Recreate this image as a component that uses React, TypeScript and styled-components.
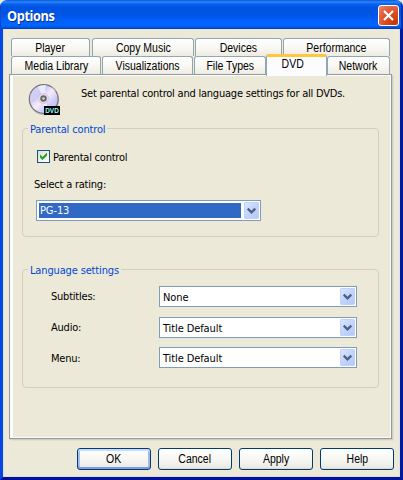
import React from "react";
import styled, { createGlobalStyle } from "styled-components";

const GlobalStyle = createGlobalStyle`
  * { box-sizing: border-box; }
  body { margin: 0; background: #ece9d8; overflow: hidden; }
`;

const Window = styled.div`
  width: 403px;
  height: 480px;
  display: flex;
  flex-direction: column;
  background: #ece9d8;
  border-radius: 7px 7px 0 0;
  overflow: hidden;
  color: #000;
  font: 11px/14px "DejaVu Sans Condensed", "DejaVu Sans", sans-serif;
  font-stretch: condensed;
`;

const TitleBar = styled.header`
  height: 29px;
  flex: none;
  display: flex;
  justify-content: space-between;
  align-items: flex-start;
  padding: 5px 4px 0 6.6px;
  background: linear-gradient(#0a55d8 0, #2b86fb 2px, #0a62f0 4px, #0054e3 7px, #0055e5 15px, #0061fb 21px, #0166ff 25px, #005bef 27px, #0038b8 29px);
  box-shadow: inset 1px 0 #0846cc, inset -2px 0 #0030b4;
`;

const Title = styled.h1`
  margin: 0;
  color: #fff;
  font: bold 14px/22px "Open Sans", sans-serif;
  letter-spacing: -0.45px;
  text-shadow: 1px 1px #0b2f8c;
  transform: scaleX(0.91);
  transform-origin: left;
`;

const CloseButton = styled.button`
  width: 21px;
  height: 21px;
  padding: 0;
  border: 1px solid #fff;
  border-radius: 3px;
  background: radial-gradient(circle at 85% 90%, #c73705 0, #dc4c22 45%, #e5694a 75%, #eb8b70 100%);
  svg { display: block; }
`;

const Body = styled.main`
  flex: 1;
  padding: 9px 7px 0 6px;
  border: solid;
  border-width: 0 3px 3px;
  border-color: transparent #001ba0 #00129b #0648df;
  box-shadow: inset 1px 0 #d9e0e6, inset -1px 0 #e0e0e2, inset 0 -1px #dadde3;
`;

const TabRow = styled.div<{ $front?: boolean }>`
  display: flex;
  height: 18px;
  padding: 0 2px;
  position: relative;
  z-index: ${(p) => (p.$front ? 2 : 0)};
`;

const TabShape = styled.div<{ $w: number; $gap?: number; $active?: boolean }>`
  flex: none;
  width: ${(p) => p.$w}px;
  height: ${(p) => (p.$active ? 22 : 18)}px;
  margin: ${(p) => (p.$active ? -2 : 0)}px ${(p) => p.$gap ?? 0}px 0 0;
  padding-right: ${(p) => (p.$active ? 8 : 0)}px;
  border: 1px solid #91a7b4;
  border-bottom: 0;
  border-radius: 3px 3px 0 0;
  background: ${(p) => (p.$active ? "#fcfcfe" : "linear-gradient(#fff, #f8f7f2 55%, #edebe2)")};
  ${(p) => p.$active && "border-top: 3px solid #ffc73c; box-shadow: inset 0 0 #fff, 0 -1px 0 -1px #e68b2c;"}
  display: flex;
  justify-content: center;
  font: 12px/${(p) => (p.$active ? 14 : 19)}px "Liberation Sans", sans-serif;
  white-space: nowrap;
`;

const Narrow = styled.span`
  display: inline-block;
  transform: scaleX(0.875);
`;

const Panel = styled.section`
  width: 383px;
  height: 365px;
  border: 1px solid #919b9c;
  box-shadow: inset 3px 0 #fcfcfe, inset -1px -1px #fcfcfe, inset 0 1px #fcfcfe, 1px 1px #d0cebf, 2px 2px #e3e0d0;
  padding: 8px 12px 0;
  letter-spacing: -0.22px;
`;

const Intro = styled.div`
  display: flex;
  height: 38px;
  padding-left: 6px;
  gap: 19px;
  svg { flex: none; }
`;

const Text = styled.span`
  white-space: nowrap;
`;

const IntroText = styled(Text)`
  padding-top: 4px;
`;

const Group = styled.fieldset<{ $h: number; $mt?: number; $pl: number }>`
  min-width: 0;
  width: 357px;
  height: ${(p) => p.$h}px;
  margin: ${(p) => p.$mt ?? 0}px 0 0;
  padding: 0 0 0 ${(p) => p.$pl}px;
  border: 1px solid #d0d0bf;
  border-radius: 4px;
`;

const Legend = styled.legend<{ $pull: number }>`
  height: 14px;
  margin-left: -${(p) => p.$pull}px;
  padding: 0 2px;
  color: #0046d5;
  line-height: 17px;
  letter-spacing: -0.15px;
`;

const CheckRow = styled.div`
  display: flex;
  gap: 3px;
  height: 14px;
  margin: 15px 0 13px 3px;
  line-height: 15px;
`;

const CheckBox = styled.span`
  width: 13px;
  height: 13px;
  border: 1px solid #1c5180;
  background: linear-gradient(135deg, #dcdcd7, #fff);
  svg { display: block; }
`;

const Combo = styled.div<{ $w: number }>`
  display: flex;
  gap: 3px;
  width: ${(p) => p.$w}px;
  height: 21px;
  padding: 1px 1px 1px 2px;
  border: 1px solid #7f9db9;
  background: #fff;
`;

const Value = styled.span<{ $selected?: boolean }>`
  flex: 1;
  height: 15px;
  margin-top: 1px;
  padding-left: 1px;
  line-height: 17px;
  letter-spacing: -0.1px;
  white-space: nowrap;
  ${(p) => p.$selected && "background: #316ac5; color: #fff; line-height: 16px;"}
`;

const Arrow = styled.span`
  width: 15px;
  height: 17px;
  border: 1px solid #c1d1fb;
  border-radius: 1px;
  background: linear-gradient(135deg, #dae5ff, #c3d3fd 50%, #b4c9f8);
  svg { display: block; }
`;

const RatingLabel = styled.div`
  height: 14px;
  margin-bottom: 9px;
  line-height: 15px;
`;

const RatingCombo = styled(Combo)`
  margin-left: 2px;
`;

const Settings = styled.div`
  display: grid;
  grid-template-columns: 109px 198px;
  grid-template-rows: 31px 30px 31px;
  padding-top: 10px;
`;

const SettingLabel = styled(Text)<{ $drop?: number }>`
  padding: ${(p) => 4 + (p.$drop ?? 0)}px 0 0 1px;
`;

const Footer = styled.footer`
  display: flex;
  gap: 7px;
  padding: 9px 0 0 68px;
`;

const Button = styled.button<{ $primary?: boolean }>`
  flex: none;
  width: 74px;
  height: 22px;
  padding: 0;
  border: 1px solid #003c74;
  border-radius: 3px;
  background: linear-gradient(#fff, #f5f5f0 60%, #eae7df);
  box-shadow: ${(p) =>
    p.$primary
      ? "inset 0 2px #cbdcfb, inset 0 -2px #7c9be0, inset 2px 0 #a7c0f0, inset -2px 0 #a0b8ec"
      : "inset 0 -1px #dcd9ce"};
  color: #000;
  font: 12px/20px "Liberation Sans", sans-serif;
  text-align: center;
`;

const Tab = ({ w, gap, active, label }: { w: number; gap?: number; active?: boolean; label: string }) => (
  <TabShape $w={w} $gap={gap} $active={active}>
    <Narrow>{label}</Narrow>
  </TabShape>
);

const PushButton = ({ label, primary }: { label: string; primary?: boolean }) => (
  <Button $primary={primary}>
    <Narrow>{label}</Narrow>
  </Button>
);

const ArrowButton = () => (
  <Arrow>
    <svg width="13" height="15" viewBox="0 0 13 15">
      <path d="M2.7 5.6 6.5 9.4l3.8-3.8" fill="none" stroke="#4d6185" strokeWidth="2.2" />
    </svg>
  </Arrow>
);

const Select = ({ value }: { value: string }) => (
  <Combo $w={198}>
    <Value>{value}</Value>
    <ArrowButton />
  </Combo>
);

const DiscIcon = () => (
  <svg width="34" height="34" viewBox="0 0 34 34">
    <defs>
      <linearGradient id="disc" x1="0" y1="0" x2="1" y2="1">
        <stop offset="0" stopColor="#d8d8f0" />
        <stop offset=".35" stopColor="#cfcaf5" />
        <stop offset=".5" stopColor="#f8eef8" />
        <stop offset=".7" stopColor="#cbcbfa" />
        <stop offset="1" stopColor="#b8b8df" />
      </linearGradient>
    </defs>
    <ellipse cx="16.2" cy="17" rx="15" ry="15.2" fill="#aaa99f" opacity=".65" />
    <circle cx="15.7" cy="16" r="14.4" fill="url(#disc)" stroke="#77757d" strokeWidth="1.2" />
    <path d="M15.7 16 10 3.5Q14 1.5 18 2Z M15.7 16 22 28.5 16 30Z" fill="#fff" opacity=".6" />
    <path d="M15.7 16 24 4l4 4Z M15.7 16 6 26l-3-6Z" fill="#f5e3f5" opacity=".5" />
    <circle cx="15.5" cy="15.5" r="5" fill="#eedbea" stroke="#d4c4df" />
    <circle cx="15.5" cy="15.5" r="2.3" fill="#d8d8cf" stroke="#66666c" strokeWidth="1.9" />
    <rect x="16" y="23" width="16" height="9" fill="#000" />
    <text x="17.2" y="30.1" fill="#9ff" fontFamily="Liberation Sans" fontWeight="bold" fontSize="7.2" letterSpacing="0" textLength="13.6" lengthAdjust="spacingAndGlyphs">DVD</text>
  </svg>
);

export default function App() {
  return (
    <>
      <GlobalStyle />
      <Window>
        <TitleBar>
          <Title>Options</Title>
          <CloseButton aria-label="Close">
            <svg width="19" height="19" viewBox="0 0 19 19">
              <path d="m5 5 9 9M14 5l-9 9" stroke="#fff" strokeWidth="2.2" />
            </svg>
          </CloseButton>
        </TitleBar>
        <Body>
          <TabRow>
            <Tab w={79} gap={2} label="Player" />
            <Tab w={102} gap={1} label="Copy Music" />
            <Tab w={87} gap={1} label="Devices" />
            <Tab w={107} label="Performance" />
          </TabRow>
          <TabRow $front>
            <Tab w={90} gap={1} label="Media Library" />
            <Tab w={91} gap={1} label="Visualizations" />
            <Tab w={72} label="File Types" />
            <Tab w={61} active label="DVD" />
            <Tab w={63} label="Network" />
          </TabRow>
          <Panel>
            <Intro>
              <DiscIcon />
              <IntroText>Set parental control and language settings for all DVDs.</IntroText>
            </Intro>
            <Group $h={116} $pl={11}>
              <Legend $pull={6}>Parental control</Legend>
              <CheckRow>
                <CheckBox>
                  <svg width="11" height="11" viewBox="0 0 11 11">
                    <path d="M2 3.5v3L4.5 9 9 4.5v-3L4.5 6Z" fill="#21a121" />
                  </svg>
                </CheckBox>
                <Text>Parental control</Text>
              </CheckRow>
              <RatingLabel><Text>Select a rating:</Text></RatingLabel>
              <RatingCombo $w={225}>
                <Value $selected>PG-13</Value>
                <ArrowButton />
              </RatingCombo>
            </Group>
            <Group $h={126} $mt={25} $pl={27}>
              <Legend $pull={22}>Language settings</Legend>
              <Settings>
                <SettingLabel>Subtitles:</SettingLabel>
                <Select value="None" />
                <SettingLabel>Audio:</SettingLabel>
                <Select value="Title Default" />
                <SettingLabel $drop={1}>Menu:</SettingLabel>
                <Select value="Title Default" />
              </Settings>
            </Group>
          </Panel>
          <Footer>
            <PushButton primary label="OK" />
            <PushButton label="Cancel" />
            <PushButton label="Apply" />
            <PushButton label="Help" />
          </Footer>
        </Body>
      </Window>
    </>
  );
}
